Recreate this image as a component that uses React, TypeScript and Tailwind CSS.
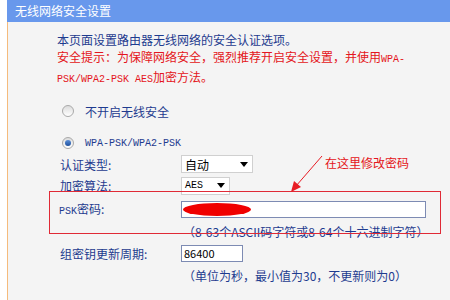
import React from "react"

const cjk = { fontFamily: '"Noto Sans CJK SC", "Noto Sans", sans-serif' }
const mono = "font-['Liberation_Mono',monospace] text-[10px]"

function Radio({ checked }: { checked?: boolean }) {
  return (
    <span className="flex h-[12px] w-[12px] items-center justify-center rounded-full border border-[#a9a9a9] bg-gradient-to-b from-[#dcdcdc] to-[#ffffff]">
      {checked && <span className="h-[6px] w-[6px] rounded-full bg-gradient-to-b from-[#5b8fd8] to-[#1d4f9c]" />}
    </span>
  )
}

function Select({ label, width, isMono }: { label: string; width: string; isMono?: boolean }) {
  return (
    <div className={`flex h-[18px] items-center justify-between border border-[#d0d0d0] bg-white pl-[3px] pr-[4px] ${width}`}>
      <span className={isMono ? `${mono} text-black` : "text-[12px] text-black"}>{label}</span>
      <span className="h-0 w-0 border-x-[4px] border-t-[5px] border-x-transparent border-t-black" />
    </div>
  )
}

export default function App() {
  return (
    <div className="relative flex h-[300px] w-[450px] overflow-hidden bg-white" style={cjk}>
      <div className="ml-[7px] flex flex-1 flex-col">
        <div className="h-[22px] bg-[#6898ec] pl-[8px] text-[12px] leading-[21px] text-white">无线网络安全设置</div>

        <div className="flex-1 border-l border-[#f5bb7c] bg-[#f4f4f4] pl-[49px] pt-[9px] text-[12px] leading-[17px] text-[#1e3b8f]">
          <div>本页面设置路由器无线网络的安全认证选项。</div>
          <div className="text-[#e41520]">
            安全提示：为保障网络安全，强烈推荐开启安全设置，并使用<span className={mono}>WPA-</span>
          </div>
          <div className="text-[#e41520]">
            <span className={mono}>PSK/WPA2-PSK AES</span>加密方法。
          </div>

          {/* security mode */}
          <div className="mt-[14px] flex h-[18px] items-center gap-[11px] pl-[5px]">
            <Radio />
            <span className="text-[#1e3b8f]">不开启无线安全</span>
          </div>
          <div className="mt-[14px] flex h-[18px] items-center gap-[11px] pl-[5px]">
            <Radio checked />
            <span className={mono}>WPA-PSK/WPA2-PSK</span>
          </div>

          <div className="mt-[3px] flex h-[18px] items-center">
            <span className="w-[124px] pl-[3px]">认证类型:</span>
            <Select label="自动" width="w-[72px]" />
          </div>
          <div className="mt-[4px] flex h-[17px] items-center">
            <span className="w-[124px] pl-[3px]">加密算法:</span>
            <Select label="AES" width="w-[49px]" isMono />
          </div>

          <div className="mt-[7px] flex h-[17px] items-center">
            <span className="w-[124px] pl-[2px]">
              <span className={mono}>PSK</span>密码:
            </span>
            <div className="flex h-[17px] w-[245px] items-center border border-[#7d8bb3] bg-white pl-[1px]">
              <span className="h-[13px] w-[68px] rounded-[50%] bg-[#f00000]" />
            </div>
          </div>
          <div className="ml-[126px] mt-[5px]">（8-63个ASCII码字符或8-64个十六进制字符）</div>

          <div className="mt-[5px] flex h-[17px] items-center">
            <span className="w-[124px] pl-[3px]">组密钥更新周期:</span>
            <div className="flex h-[17px] w-[62px] items-center border border-[#7d8bb3] bg-white pl-[2px] text-[11px] text-black">
              86400
            </div>
          </div>
          <div className="ml-[126px] mt-[5px]">（单位为秒，最小值为30，不更新则为0）</div>
        </div>
      </div>

      {/* annotation overlay */}
      <div className="absolute left-[49px] top-[191px] h-[43px] w-[392px] border border-[#e02a36]" />
      <svg className="absolute left-0 top-0" width="450" height="300">
        <line x1="322" y1="156" x2="296" y2="186" stroke="#e81c24" strokeWidth="1" />
        <polygon points="291,192 294,181 301,187" fill="#e81c24" />
      </svg>
      <div className="absolute left-[325px] top-[154px] text-[12px] leading-[17px] text-[#e41520]">在这里修改密码</div>
    </div>
  )
}
